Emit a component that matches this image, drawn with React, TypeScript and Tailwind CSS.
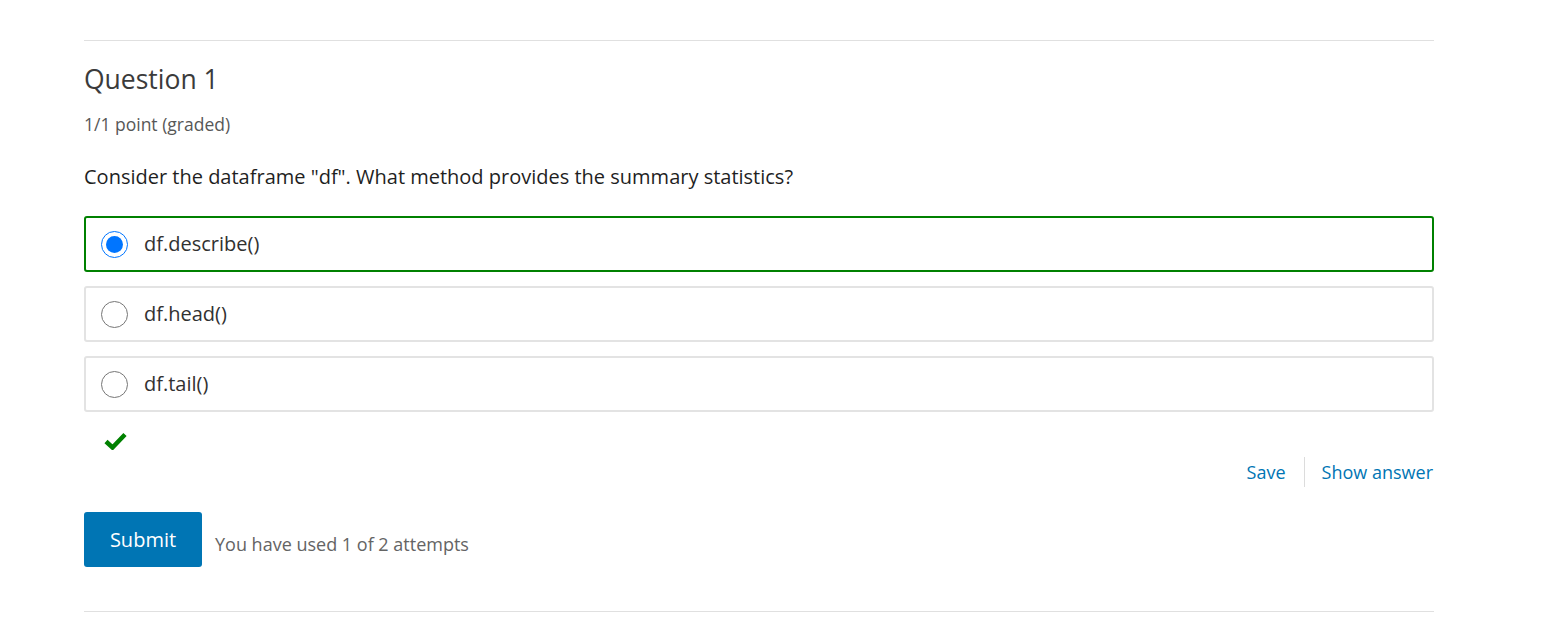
const options = [
  { label: "df.describe()", selected: true },
  { label: "df.head()", selected: false },
  { label: "df.tail()", selected: false },
];

function Radio({ checked }: { checked: boolean }) {
  if (checked) {
    return (
      <span className="flex h-[27px] w-[27px] shrink-0 items-center justify-center rounded-full border-[1.5px] border-[#0075ff] bg-white">
        <span className="h-[17px] w-[17px] rounded-full bg-[#0075ff]" />
      </span>
    );
  }
  return (
    <span className="h-[27px] w-[27px] shrink-0 rounded-full border-[1.5px] border-[#767676] bg-white" />
  );
}

function OptionRow({ label, selected }: { label: string; selected: boolean }) {
  return (
    <label
      className={`flex h-[56px] items-center rounded-[3px] border-2 pl-[15px] ${
        selected ? "border-[#008100]" : "border-[#e3e3e3]"
      }`}
    >
      <Radio checked={selected} />
      <span className="ml-[16px] text-[20px] text-[#313131]">{label}</span>
    </label>
  );
}

export default function App() {
  return (
    <div
      className="min-h-screen bg-white"
      style={{ fontFamily: '"Open Sans", "Noto Sans", sans-serif' }}
    >
      <div className="ml-[84px] w-[1350px] pt-[40px]">
        <div className="border-t border-[#e0e0e0]" />

        <h3 className="mt-[19px] text-[26.5px] leading-[38px] font-normal text-[#3b3b3b]">
          Question 1
        </h3>
        <p className="mt-[15px] text-[17.5px] leading-[22px] text-[#575757]">
          1/1 point (graded)
        </p>
        <p className="mt-[29px] text-[20px] leading-[26px] text-[#1f1f1f]">
          Consider the dataframe "df". What method provides the summary statistics?
        </p>

        <div className="mt-[26px] flex flex-col gap-[14px]">
          {options.map((o) => (
            <OptionRow key={o.label} label={o.label} selected={o.selected} />
          ))}
        </div>

        <div className="mt-[20px] pl-[20px]">
          <svg width="23" height="18" viewBox="0 0 23 18" aria-hidden>
            <path
              d="M2 9.5 L8.5 15.5 L21 2.5"
              fill="none"
              stroke="#008100"
              strokeWidth="4.5"
              strokeLinejoin="miter"
            />
          </svg>
        </div>

        <div className="mt-[7px] flex justify-end">
          <div className="flex h-[30px] items-center text-[18px] text-[#0075b4] [font-weight:500]">
            <span className="pr-[18px]">Save</span>
            <span className="h-[30px] border-l border-[#dcdcdc]" />
            <span className="pl-[17px] pr-[1px]">Show answer</span>
          </div>
        </div>

        <div className="mt-[25px] flex items-end">
          <button className="h-[55px] w-[118px] rounded-[3px] bg-[#0075b4] text-[20px] text-white">
            Submit
          </button>
          <span className="mb-[9px] ml-[13px] text-[18px] text-[#646464]">
            You have used 1 of 2 attempts
          </span>
        </div>

        <div className="mt-[44px] border-t border-[#e0e0e0]" />
      </div>
    </div>
  );
}
